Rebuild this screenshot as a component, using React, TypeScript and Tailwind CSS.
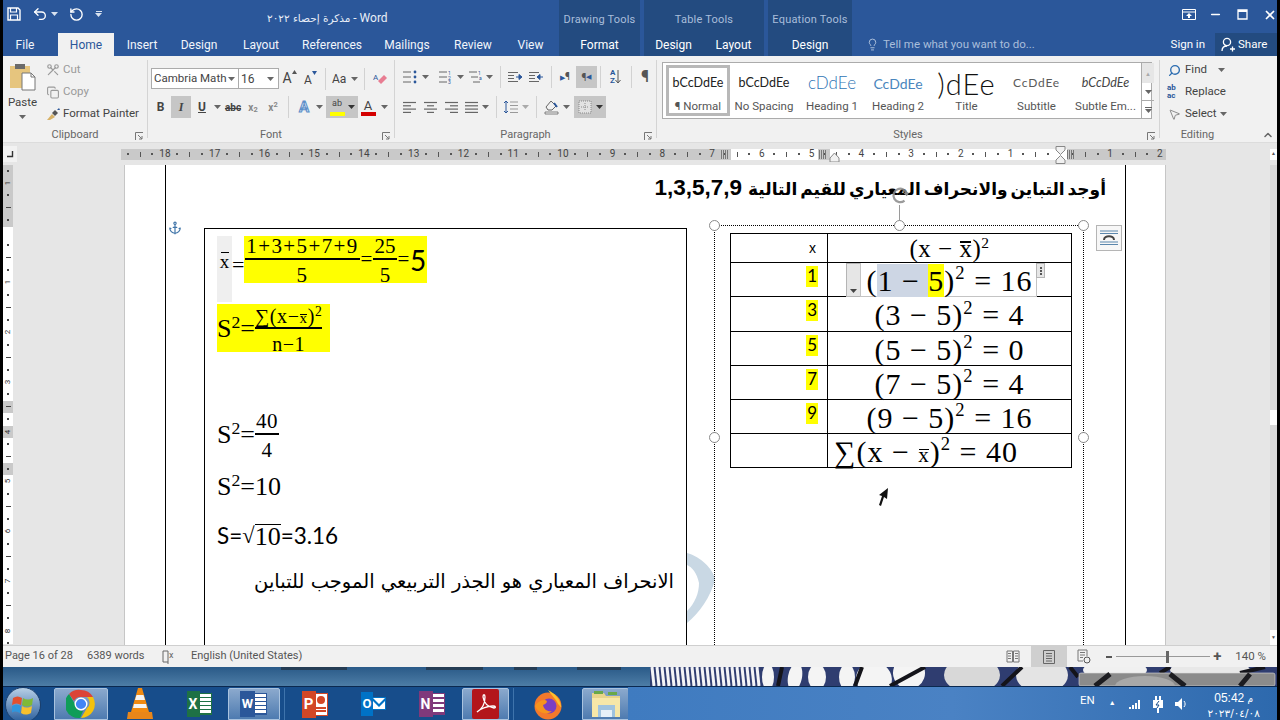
import React from 'react';
import { Undo2, RotateCw, Scissors, Copy, Search, MousePointer2, Lightbulb, X, Minus, ChevronUp, Anchor } from 'lucide-react';

const Caret = ({ c = '#666' }: { c?: string }) => (
  <svg width="7" height="4" viewBox="0 0 7 4" className="shrink-0"><path d="M0 0h7L3.5 4z" fill={c} /></svg>
);

const Launcher = () => (
  <svg width="9" height="9" viewBox="0 0 9 9" className="shrink-0"><path d="M.5 8V.5H8M3 3l4 4M7 4v3H4" fill="none" stroke="#777" /></svg>
);

const Sep = ({ cls = 'mx-[6px]' }: { cls?: string }) => <div className={`w-px h-[22px] bg-[#d2d2d2] shrink-0 ${cls}`} />;

const Lines = ({ rows, c = '#666' }: { rows: number[][]; c?: string }) => (
  <svg width="15" height="13" viewBox="0 0 15 13">
    {rows.map((r, i) => <path key={i} d={`M${r[0]} ${1.5 + i * 3.3}H${r[1]}`} stroke={c} strokeWidth="1.2" />)}
  </svg>
);

const Group = ({ label, w, launcher, children }: { label: string; w: string; launcher?: boolean; children: React.ReactNode }) => (
  <div className={`${w} shrink-0 flex flex-col`}>
    <div className="h-[73px] shrink-0">{children}</div>
    <div className="h-[13px] shrink-0 flex items-center relative text-[11px] text-[#666]">
      <span className="flex-1 text-center">{label}</span>
      {launcher && <span className="absolute right-[3px] top-[3px]"><Launcher /></span>}
    </div>
  </div>
);

const GroupLine = () => <div className="w-px my-[4px] bg-[#d4d4d4] shrink-0" />;

function TitleArea() {
  return (
    <div className="h-[56px] bg-[#2b579a] flex text-white shrink-0">
      <div className="w-[556px] flex flex-col">
        <div className="h-[33px] flex items-start">
          <div className="flex items-center pt-[6px]">
            <div className="w-[18px] flex justify-end">
              <svg width="14" height="14" viewBox="0 0 14 14"><path d="M1 1h10l2 2v10H1z" fill="none" stroke="#fff" strokeWidth="1.4" /><path d="M3.5 1v4h6V1M3.5 13V8h7v5" fill="none" stroke="#fff" strokeWidth="1.2" /></svg>
            </div>
            <Undo2 size={16} strokeWidth={2} className="ml-[11px]" />
            <span className="ml-[3px]"><Caret c="#d8e2f0" /></span>
            <RotateCw size={15} strokeWidth={2.2} className="ml-[11px] -scale-x-100" />
            <div className="ml-[11px] flex flex-col items-center gap-[1px]">
              <div className="w-[6px] h-px bg-[#d8e2f0]" />
              <Caret c="#d8e2f0" />
            </div>
          </div>
          <div dir="ltr" className="ml-[165px] pt-[9px] text-[12px] text-[#e8eef7] whitespace-nowrap font-['DejaVu_Sans',sans-serif]">
            <span className="text-[10.5px]">مذكرة إحصاء ٢٠٢٢</span><span className="font-['Roboto',sans-serif] text-[12px]"> - Word</span>
          </div>
        </div>
        <div className="h-[23px] flex text-[12px] text-[#f2f5fa]">
          <div className="w-[55px] pr-[11px] flex items-center justify-center">File</div>
          <div className="w-[56px] flex items-center justify-center bg-[#f1f1f1] text-[#2b579a]">Home</div>
          <div className="w-[56px] flex items-center justify-center">Insert</div>
          <div className="w-[58px] flex items-center justify-center">Design</div>
          <div className="w-[66px] flex items-center justify-center">Layout</div>
          <div className="w-[76px] flex items-center justify-center">References</div>
          <div className="w-[74px] flex items-center justify-center">Mailings</div>
          <div className="w-[58px] flex items-center justify-center">Review</div>
          <div className="w-[57px] flex items-center justify-center">View</div>
        </div>
      </div>
      <div className="w-[81px] bg-[#234b80] flex flex-col">
        <div className="h-[33px] pt-[7px] flex items-center justify-center text-[11px] text-[#a9bedb] tracking-[0.2px]">Drawing Tools</div>
        <div className="h-[23px] flex items-center justify-center text-[12px]">Format</div>
      </div>
      <div className="w-[120px] ml-[4px] bg-[#234b80] flex flex-col">
        <div className="h-[33px] pt-[7px] flex items-center justify-center text-[11px] text-[#a9bedb] tracking-[0.2px]">Table Tools</div>
        <div className="h-[23px] flex text-[12px]">
          <div className="w-[59px] flex items-center justify-center">Design</div>
          <div className="w-[61px] flex items-center justify-center">Layout</div>
        </div>
      </div>
      <div className="w-[84px] ml-[4px] bg-[#234b80] flex flex-col">
        <div className="h-[33px] pt-[7px] flex items-center justify-center text-[11px] text-[#a9bedb] tracking-[0.2px]">Equation Tools</div>
        <div className="h-[23px] flex items-center justify-center text-[12px]">Design</div>
      </div>
      <div className="flex-1 flex flex-col">
        <div className="h-[33px] pb-[4px] flex items-center justify-end">
          <svg width="14" height="11" viewBox="0 0 14 11"><path d="M.5.5h13v10H.5zM.5 3h13" fill="none" stroke="#fff" /><path d="M7 4l3 3H8v2H6V7H4z" fill="#fff" /></svg>
          <Minus size={13} strokeWidth={3} className="ml-[13px]" />
          <svg width="11" height="11" viewBox="0 0 11 11" className="ml-[15px]"><path d="M1 1h9v9H1z" fill="none" stroke="#fff" strokeWidth="1.3" /><path d="M1 2h9" stroke="#fff" strokeWidth="2" /></svg>
          <X size={14} strokeWidth={3} className="ml-[15px] mr-0" />
        </div>
        <div className="h-[23px] flex items-center text-[11.5px]">
          <Lightbulb size={13} strokeWidth={1.5} className="ml-[14px] text-[#c5d4e8]" />
          <span className="ml-[4px] text-[#a9bedb] whitespace-nowrap">Tell me what you want to do...</span>
          <span className="ml-auto mr-[10px]">Sign in</span>
          <div className="w-[62px] h-full bg-[#234b80] flex items-center pl-[6px] gap-[3px]">
            <svg width="14" height="15" viewBox="0 0 14 15"><circle cx="6" cy="5" r="3.6" fill="none" stroke="#fff" strokeWidth="1.3" /><path d="M1 14c0-3 2-5 5-5M9 12h5M11.5 9.5v5" fill="none" stroke="#fff" strokeWidth="1.3" /></svg>
            <span>Share</span>
          </div>
        </div>
      </div>
    </div>
  );
}

function Clipboard() {
  return (
    <Group label="Clipboard" w="w-[144px]" launcher>
      <div className="flex">
        <div className="w-[39px] flex flex-col items-center pt-[7px]">
          <svg width="28" height="28" viewBox="0 0 28 28">
            <rect x="1" y="3" width="20" height="22" fill="#e6c57e" />
            <rect x="6" y="1" width="10" height="5" fill="#6b6b6b" />
            <path d="M13 10h9l4 4v13H13z" fill="#fff" stroke="#777" />
            <path d="M22 10v4h4" fill="none" stroke="#777" />
          </svg>
          <span className="text-[11.5px] text-[#444] mt-[4px] leading-[14px]">Paste</span>
          <span className="mt-[6px]"><Caret /></span>
        </div>
        <div className="flex flex-col pt-[3px] text-[11.5px]">
          <div className="h-[22px] flex items-center ml-[4px] text-[#9a9a9a]"><Scissors size={14} className="w-[14px] -scale-x-100 -rotate-90" /><span className="ml-[3px]">Cut</span></div>
          <div className="h-[22px] flex items-center ml-[4px] text-[#9a9a9a]"><Copy size={13} className="w-[14px]" /><span className="ml-[3px]">Copy</span></div>
          <div className="h-[22px] flex items-center ml-[4px] text-[#444] whitespace-nowrap">
            <svg width="15" height="14" viewBox="0 0 15 14"><path d="M1 13l5-6 3 3-5 3z" fill="#d8b267" /><path d="M6 6l3-3 3 3-3 3z" fill="#555" /><path d="M11 3l2-2 1 2z" fill="#2b579a" /></svg>
            <span className="ml-[2px]">Format Painter</span>
          </div>
        </div>
      </div>
    </Group>
  );
}

function FontGroup() {
  return (
    <Group label="Font" w="w-[246px]" launcher>
      <div className="pt-[12px] pl-[3px]">
        <div className="h-[21px] flex items-center text-[#444]">
          <div className="w-[88px] h-full bg-white border border-[#ababab] flex items-center justify-between pl-[2px] pr-[3px] text-[11.5px] whitespace-nowrap">Cambria Math<Caret /></div>
          <div className="w-[40px] h-full bg-white border border-l-0 border-[#ababab] flex items-center justify-between pl-[2px] pr-[4px] text-[12px]">16<Caret /></div>
          <div className="w-[21px] flex justify-center items-start text-[14px]"><span>A</span><svg width="5" height="4" viewBox="0 0 5 4" className="mt-[2px]"><path d="M0 4l2.500-4L5 4z" fill="#555" /></svg></div>
          <div className="w-[21px] flex justify-center items-start text-[12px] pt-[2px]"><span>A</span><svg width="5" height="4" viewBox="0 0 5 4"><path d="M0 0l2.500 4L5 0z" fill="#2b579a" /></svg></div>
          <Sep cls="ml-[4px] mr-[6px]" />
          <div className="flex items-center gap-[5px] text-[12px] w-[26px]">Aa<Caret /></div>
          <Sep cls="ml-[6px] mr-[8px]" />
          <svg width="16" height="14" viewBox="0 0 16 14"><path d="M8 12l6-6-3-3-6 6z" fill="#e87d92" /><text x="0" y="8" fontSize="8" fill="#2b579a" fontFamily="Roboto">A</text></svg>
        </div>
        <div className="h-[22px] mt-[7px] flex items-center text-[#444] -ml-[1px]">
          <div className="w-[21px] text-center text-[12px] font-bold">B</div>
          <div className="w-[20px] h-full bg-[#c6c6c6] flex items-center justify-center text-[12px] italic font-['Liberation_Serif',serif] font-bold">I</div>
          <div className="w-[20px] pl-[2px] text-center text-[12px] underline font-bold">U</div>
          <div className="w-[12px] pl-[3px]"><Caret /></div>
          <div className="w-[20px] text-center text-[10px] line-through font-bold">abc</div>
          <div className="w-[20px] text-center text-[10px] text-[#888] font-bold">x<sub>2</sub></div>
          <div className="w-[20px] text-center text-[10px] text-[#888] font-bold">x<sup>2</sup></div>
          <Sep cls="ml-[5px] mr-[7px]" />
          <div className="w-[16px] text-center text-[15px] leading-none font-bold text-[#dbe7f5] [-webkit-text-stroke:1px_#5b8fc9]">A</div>
          <div className="w-[13px] pl-[4px]"><Caret /></div>
          <div className="w-[32px] h-full bg-[#c6c6c6] flex items-center justify-center gap-[3px] ml-[1px]">
            <div className="flex flex-col items-center leading-none">
              <span className="text-[9px] h-[11px]">ab</span>
              <div className="w-[15px] h-[4px] bg-[#ffff00] mt-[2px]" />
            </div>
            <Caret c="#333" />
          </div>
          <div className="w-[16px] ml-[2px] flex flex-col items-center leading-none">
            <span className="text-[13px] h-[13px]">A</span>
            <div className="w-[15px] h-[4px] bg-[#d40000]" />
          </div>
          <div className="pl-[5px]"><Caret /></div>
        </div>
      </div>
    </Group>
  );
}

const left = [[1, 14], [1, 9], [1, 14], [1, 9]];
const center = [[1, 14], [4, 11], [1, 14], [4, 11]];
const right = [[1, 14], [6, 14], [1, 14], [6, 14]];
const just = [[1, 14], [1, 14], [1, 14], [1, 14]];

function Paragraph() {
  return (
    <Group label="Paragraph" w="w-[261px]" launcher>
      <div className="pt-[10px] pl-[7px]">
        <div className="h-[22px] flex items-center">
          <svg width="16" height="14" viewBox="0 0 16 14"><path d="M1 2h8M1 7h8M1 12h8" stroke="#666" /><circle cx="13" cy="2" r="1.4" fill="#2b579a" /><circle cx="13" cy="7" r="1.4" fill="#2b579a" /><circle cx="13" cy="12" r="1.4" fill="#2b579a" /></svg>
          <span className="ml-[4px] mr-[9px]"><Caret /></span>
          <svg width="15" height="14" viewBox="0 0 15 14"><path d="M1 2h8M1 7h8M1 12h8" stroke="#666" /><text x="10" y="5" fontSize="5" fill="#2b579a">1</text><text x="10" y="10" fontSize="5" fill="#2b579a">2</text><text x="10" y="14" fontSize="5" fill="#2b579a">3</text></svg>
          <span className="ml-[4px] mr-[4px]"><Caret /></span>
          <svg width="15" height="14" viewBox="0 0 15 14"><path d="M1 2h8M3 7h7M5 12h7" stroke="#666" /><text x="10" y="5" fontSize="5" fill="#2b579a">1</text><text x="11" y="10" fontSize="5" fill="#2b579a">a</text></svg>
          <span className="ml-[3px]"><Caret /></span>
          <Sep cls="ml-[7px] mr-[6px]" />
          <svg width="16" height="12" viewBox="0 0 16 12"><path d="M1 1.5h10M1 4.5h6M1 7.5h6M1 10.5h10" stroke="#666" /><path d="M9 6h4M12 3.5L15 6l-3 2.5z" stroke="#2b579a" fill="#2b579a" /></svg>
          <span className="w-[5px]" />
          <svg width="16" height="12" viewBox="0 0 16 12"><path d="M1 1.5h10M1 4.5h6M1 7.5h6M1 10.5h10" stroke="#666" /><path d="M15 6h-4M12 3.5L9 6l3 2.5z" stroke="#2b579a" fill="#2b579a" /></svg>
          <Sep cls="ml-[7px] mr-[8px]" />
          <div className="w-[12px] text-[10px] text-[#555] leading-none whitespace-nowrap"><span className="text-[#2b579a] text-[7px]">▶</span>¶</div>
          <div className="w-[21px] h-full bg-[#c6c6c6] ml-[4px] flex items-center justify-center text-[10px] text-[#555] whitespace-nowrap">¶<span className="text-[#2b579a] text-[7px]">◀</span></div>
          <Sep cls="ml-[3px] mr-[9px]" />
          <div className="w-[14px] flex items-center">
            <div className="text-[8px] leading-[8px] text-[#2b579a] font-bold">A<br />Z</div>
            <svg width="6" height="14" viewBox="0 0 6 14"><path d="M3 0v13M.5 10L3 13l2.5-3" fill="none" stroke="#555" /></svg>
          </div>
          <Sep cls="ml-[7px] mr-[9px]" />
          <span className="text-[16px] text-[#555] leading-none font-bold">¶</span>
        </div>
        <div className="h-[22px] mt-[8px] flex items-center">
          <Lines rows={left} />
          <span className="w-[6px]" />
          <Lines rows={center} />
          <span className="w-[6px]" />
          <Lines rows={right} />
          <span className="w-[5px]" />
          <Lines rows={just} />
          <span className="ml-[3px]"><Caret /></span>
          <Sep cls="ml-[7px] mr-[6px]" />
          <svg width="16" height="14" viewBox="0 0 16 14"><path d="M3 1v12M1 3l2-2 2 2M1 11l2 2 2-2" fill="none" stroke="#2b579a" /><path d="M7 2h8M7 5.500h8M7 9h8M7 12.500h8" stroke="#999" /></svg>
          <span className="ml-[3px]"><Caret c="#aaa" /></span>
          <Sep cls="ml-[7px] mr-[7px]" />
          <svg width="16" height="16" viewBox="0 0 16 16"><path d="M2 8l5-6 5 5-4 4H4z" fill="none" stroke="#666" /><path d="M10 4l3 4" stroke="#2b579a" strokeWidth="2" /><path d="M1 13h13v2H1z" fill="#f5f5f5" stroke="#666" strokeWidth=".8" /></svg>
          <span className="ml-[3px]"><Caret /></span>
          <div className="w-[32px] h-full ml-[4px] bg-[#c6c6c6] flex items-center justify-center gap-[4px]">
            <svg width="14" height="14" viewBox="0 0 14 14"><path d="M1 1h12v12H1z" fill="#e2e2e2" stroke="#888" strokeDasharray="1 1" /><path d="M7 3v8M3 7h8" stroke="#8a8a8a" strokeDasharray="1 1" /></svg>
            <Caret c="#333" />
          </div>
        </div>
      </div>
    </Group>
  );
}

const preview = "font-['Lato',sans-serif] text-[#222] text-[12.5px] whitespace-nowrap";
const styleName = 'mt-[3px] text-[11.5px] text-[#555] leading-none whitespace-nowrap';

function Styles() {
  return (
    <Group label="Styles" w="w-[502px]" launcher>
      <div className="pt-[6px] pl-[5px]">
        <div className="h-[57px] w-[490px] border border-[#ababab] bg-white flex">
          <div className="w-[67px] pl-[3px] py-[2px] shrink-0"><div className="h-full border-[3px] border-[#b8b8b8] flex flex-col items-center">
            <div className={`h-[30px] flex items-center ${preview}`}>bCcDdEe</div>
            <div className={styleName}>¶ Normal</div>
          </div></div>
          <div className="w-[68px] flex flex-col items-center shrink-0 pt-[5px]">
            <div className={`h-[30px] flex items-center ${preview}`}>bCcDdEe</div>
            <div className={styleName}>No Spacing</div>
          </div>
          <div className="w-[68px] flex flex-col items-center shrink-0 pt-[5px]">
            <div className="h-[30px] flex items-center text-[17px] text-[#2e74b5] font-['Lato',sans-serif] font-light whitespace-nowrap">cDdEe</div>
            <div className={styleName}>Heading 1</div>
          </div>
          <div className="w-[64px] flex flex-col items-center shrink-0 pt-[5px]">
            <div className="h-[30px] flex items-center text-[14px] text-[#4a86bd] font-['Lato',sans-serif] whitespace-nowrap">CcDdEe</div>
            <div className={styleName}>Heading 2</div>
          </div>
          <div className="w-[73px] flex flex-col items-center shrink-0 pt-[5px]">
            <div className="h-[30px] flex items-center text-[29px] leading-none text-[#111] font-['Lato',sans-serif] font-light whitespace-nowrap tracking-[1px]">)dEe</div>
            <div className={styleName}>Title</div>
          </div>
          <div className="w-[67px] flex flex-col items-center shrink-0 pt-[5px]">
            <div className="h-[30px] flex items-center text-[12px] text-[#5a5a5a] font-['Lato',sans-serif] tracking-[0.8px] whitespace-nowrap">CcDdEe</div>
            <div className={styleName}>Subtitle</div>
          </div>
          <div className="w-[71px] flex flex-col items-center shrink-0 pt-[5px]">
            <div className={`h-[30px] flex items-center italic ${preview} text-[#444]`}>bCcDdEe</div>
            <div className={styleName}>Subtle Em...</div>
          </div>
          <div className="w-[13px] border-l border-[#ababab] flex flex-col shrink-0">
            <div className="h-[20px] bg-[#e6e6e6] flex items-center justify-center text-[6px] text-[#aaa]">▲</div>
            <div className="h-[18px] border-b border-[#ababab] flex items-center justify-center"><Caret /></div>
            <div className="flex-1 flex flex-col items-center justify-center gap-[1px]"><div className="w-[7px] h-px bg-[#666]" /><Caret /></div>
          </div>
        </div>
      </div>
    </Group>
  );
}

function Editing() {
  return (
    <Group label="Editing" w="w-[75px]">
      <div className="pt-[3px] pl-[7px] text-[11.5px] text-[#444]">
        <div className="h-[22px] flex items-center gap-[3px]"><Search size={13} strokeWidth={2.5} className="w-[15px] text-[#2b6cb0] -scale-x-100" /><span>Find</span><span className="ml-[8px]"><Caret /></span></div>
        <div className="h-[22px] flex items-center gap-[3px]"><div className="w-[15px] text-[8px] leading-[8px] text-[#2b579a] font-bold">ab<br />ac</div><span>Replace</span></div>
        <div className="h-[22px] flex items-center gap-[3px]"><MousePointer2 size={13} strokeWidth={1.2} className="w-[15px] text-[#555]" /><span>Select</span><Caret /></div>
      </div>
    </Group>
  );
}

function HRuler() {
  return (
    <div className="h-[22px] flex items-center bg-[#e6e6e6] shrink-0">
      <div className="w-[14px] h-[16px] bg-[#f2f2f2] flex items-center justify-center">
        <svg width="7" height="7" viewBox="0 0 7 7"><path d="M5.500 0v5.500H0" fill="none" stroke="#333" strokeWidth="1.4" /></svg>
      </div>
      <div className="ml-[104.4px] flex relative text-[10px] text-[#444] leading-none">
        {Array.from({ length: 84 }, (_, k) => {
          const white = k >= 49 && k < 76 && k !== 56;
          const n = (k - 3) / 4;
          const label = k % 4 === 3 ? (k <= 71 ? 18 - n : k === 79 ? 1 : k === 83 ? 2 : '') : '';
          return (
            <div key={k} className={`w-[12.45px] h-[11px] shrink-0 flex items-center justify-center ${white ? 'bg-white' : 'bg-[#c9c9c9]'}`}>
              {k % 4 === 3 && <span>{label}</span>}
              {(k % 4 === 0 || k % 4 === 2) && <div className="w-[2px] h-[2px] bg-[#555]" />}
              {k % 4 === 1 && <div className="w-px h-[5px] bg-[#555]" />}
            </div>
          );
        })}
        <div className="absolute left-[600px] top-[1px] w-[7px] h-[9px] bg-[repeating-linear-gradient(90deg,#777_0_1px,transparent_1px_2px)]" />
        <div className="absolute left-[698px] top-[1px] w-[7px] h-[9px] bg-[repeating-linear-gradient(90deg,#777_0_1px,transparent_1px_2px)]" />
        <div className="absolute left-[946px] top-[1px] w-[7px] h-[9px] bg-[repeating-linear-gradient(90deg,#777_0_1px,transparent_1px_2px)]" />
        <svg width="11" height="10" viewBox="0 0 11 10" className="absolute left-[708px] top-[3px]"><path d="M5.500 1L10 6v4H1V6z" fill="#f1f1f1" stroke="#888" /></svg>
        <svg width="11" height="18" viewBox="0 0 11 18" className="absolute left-[934px] -top-[3px]"><path d="M1 .5h9V4L5.500 8.500 1 4zM5.500 9.500L10 14v3.500H1V14z" fill="#f1f1f1" stroke="#888" /></svg>
      </div>
      <div className="ml-auto w-[7px] h-[11px] bg-white flex items-center justify-center text-[5px] text-[#555]">▲</div>
    </div>
  );
}

function VRuler() {
  return (
    <div className="w-[10px] h-full overflow-hidden shrink-0 flex flex-col -mt-[0.7px] text-[8px] text-[#333] leading-none">
      {Array.from({ length: 40 }, (_, k) => {
        const grey = k < 5 || k === 19 || k === 21 || k === 24;
        const label = (k - 5) / 4;
        const isLabel = (k - 1) % 4 === 0;
        return (
          <div key={k} className={`h-[12.45px] w-full shrink-0 flex items-center justify-center ${grey ? 'bg-[#c9c9c9]' : 'bg-white'}`}>
            {isLabel && k !== 5 && <span className="-rotate-90">{k === 1 ? 1 : label}</span>}
            {k % 2 === 0 && <div className="w-[2px] h-[2px] bg-[#444]" />}
            {(k + 1) % 4 === 0 && <div className="w-[5px] h-px bg-[#444]" />}
          </div>
        );
      })}
    </div>
  );
}

const serif = "font-['Liberation_Serif',serif]";

const Frac = ({ top, bottom, cls = '', lineCls = 'h-[2px]' }: { top: React.ReactNode; bottom: React.ReactNode; cls?: string; lineCls?: string }) => (
  <span className={`inline-flex flex-col items-center align-middle leading-none mt-[3px] ${cls}`}>
    <span className="whitespace-nowrap pb-[1px]">{top}</span>
    <span className={`w-full bg-black ${lineCls}`} />
    <span className="whitespace-nowrap pt-[5px]">{bottom}</span>
  </span>
);

// x with a bar set close on top of it
const Bar = ({ cls = '' }: { cls?: string }) => (
  <span className={`relative inline-block ${cls}`}>x<span className="absolute left-[8%] right-[8%] top-[0.2em] h-[1.5px] bg-black" /></span>
);

const Handle = ({ cls }: { cls: string }) => (
  <div className={`absolute w-[11px] h-[11px] rounded-full bg-white border-[1.5px] border-[#8a8a8a] ${cls}`} />
);

const cellRight = 'border border-black w-[244px] text-center align-middle p-0';
const cellLeft = 'border border-black w-[97px] text-right align-top p-0 pr-[9px]';

const Num = ({ v }: { v: string }) => (
  <span className="inline-block bg-[#ffff00] font-['Lato',sans-serif] text-[17px] leading-[20px] h-[21px] px-[1px] mt-[3px]">{v}</span>
);

const Mathy = ({ children, cls = 'text-[30px] tracking-[1px]' }: { children: React.ReactNode; cls?: string }) => (
  <span className={`${serif} relative top-[2px] leading-none whitespace-nowrap [&_sup]:text-[0.62em] [&_sup]:-top-[0.6em] ${cls}`}>{children}</span>
);

function Page() {
  return (
    <div className="w-[1042px] bg-white border-x border-[#c6c6c6] shrink-0 h-full pl-[40px] pr-[39px] overflow-hidden">
      <div className="h-full border-x border-black relative">
        <div dir="rtl" className="h-[60px] pr-[19px] pt-[10px] text-[17px] font-bold leading-[26px] whitespace-nowrap font-['DejaVu_Sans',sans-serif] [word-spacing:-3px]">
          أوجد التباين والانحراف المعياري للقيم التالية <span className="font-['Liberation_Sans',sans-serif] text-[22.5px] mr-[3px]">1,3,5,7,9</span>
        </div>
        <Anchor size={14} strokeWidth={2} className="absolute left-[2px] top-[56px] text-[#3f74a8]" />
        <div className="flex items-start pl-[38px]">
          <div className="w-[483px] h-[430px] mt-[3px] border border-black pl-[12px] pt-[7px] text-black">
            <div className="flex items-start h-[68px]">
              <div className={`w-[15px] h-[66px] bg-[#efefef] ${serif} text-[19px] pt-[12px] text-center`}><Bar /></div>
              <div className={`${serif} text-[22px] pt-[12px] w-[11px]`}>=</div>
              <div className={`h-[47px] bg-[#ffff00] flex items-center ${serif} text-[21px] ml-[1px] pl-[1px] pr-[1px]`}>
                <Frac top="1+3+5+7+9" bottom="5" cls="w-[115px] tracking-[1.4px]" />
                <span className="w-[13px] text-center">=</span>
                <Frac top="25" bottom="5" cls="w-[24px]" />
                <span className="w-[13px] text-center">=</span>
                <span className="font-['Lato',sans-serif] text-[28px] leading-none">5</span>
              </div>
            </div>
            <div className={`w-[113px] h-[48px] bg-[#ffff00] flex items-center ${serif} text-[26px] whitespace-nowrap [&_sup]:text-[0.68em]`}>
              <span>S<sup>2</sup>=</span>
              <Frac top={<span>∑(x−<Bar cls="text-[15px]" />)<sup>2</sup></span>} bottom="n−1" cls="text-[20px] tracking-[0.6px]" />
            </div>
            <div className={`mt-[57px] h-[50px] flex items-center ${serif} text-[26px] whitespace-nowrap [&_sup]:text-[0.68em]`}>
              <span>S<sup>2</sup>=</span>
              <Frac top="40" bottom="4" cls="text-[21px] tracking-[0.5px] w-[24px]" />
            </div>
            <div className={`mt-[12px] h-[30px] flex items-center text-[26px] whitespace-nowrap ${serif} [&_sup]:text-[0.68em]`}>
              <span>S<sup>2</sup>=10</span>
            </div>
            <div className="mt-[20px] h-[30px] flex items-center text-[22.5px] whitespace-nowrap font-['Lato',sans-serif]">
              <span>S=</span><span className={serif}>√</span><span className={`${serif} text-[26px] border-t-[1.5px] border-black leading-[23px]`}>10</span><span>=3.16</span>
            </div>
            <div dir="rtl" className="mt-[16px] mr-[12px] text-[19.5px] leading-[30px] whitespace-nowrap font-['DejaVu_Sans',sans-serif] text-right">
              الانحراف المعياري هو الجذر التربيعي الموجب للتباين
            </div>
          </div>
          <svg width="28" height="74" viewBox="0 0 28 74" className="shrink-0 mt-[328px]"><path d="M0 0c14 4 26 16 28 26-4 18-16 34-28 44V58c8-8 12-18 12-28C10 20 5 14 0 12z" fill="#c9d8e4" /></svg>
          <div className="-ml-px w-[370px] h-[430px] border-x border-t border-dotted border-black relative">
            <Handle cls="-left-[6px] -top-[6px]" />
            <Handle cls="left-[179px] -top-[6px]" />
            <Handle cls="-right-[6px] -top-[6px]" />
            <Handle cls="-left-[6px] top-[206px]" />
            <Handle cls="-right-[6px] top-[206px]" />
            <div className="absolute left-[184px] -top-[21px] w-px h-[16px] bg-[#9a9a9a]" />
            <svg width="18" height="18" viewBox="0 0 16 16" className="absolute left-[176px] -top-[40px]"><path d="M12 13A6 6 0 1 1 14 7" fill="none" stroke="#8a8a8a" strokeWidth="2" opacity=".85" /><path d="M11 6h5l-2 3z" fill="#8a8a8a" /></svg>
            <div className="absolute -right-[39px] -top-[1px] w-[26px] h-[26px] bg-[#f7f7f7] border border-[#b5b5b5] flex items-center justify-center">
              <svg width="20" height="16" viewBox="0 0 20 16"><path d="M1 1h18M1 3.500h18M1 12h18M1 14.500h18" stroke="#5b87ad" /><path d="M5 10c0-5 10-5 10 0" fill="none" stroke="#444" strokeWidth="2" /></svg>
            </div>
            <table className="mt-[7px] ml-[15px] border-collapse text-black table-fixed">
              <tbody>
                <tr className="h-[29px]">
                  <td className="border border-black w-[97px] text-right align-middle p-0 pr-[11px] text-[14px] font-['Liberation_Sans',sans-serif]">x</td>
                  <td className={cellRight}><Mathy cls="text-[25px] tracking-[0.5px]">(x − <Bar />)<sup>2</sup></Mathy></td>
                </tr>
                <tr className="h-[34px]">
                  <td className={cellLeft}><Num v="1" /></td>
                  <td className={`${cellRight} relative`}>
                    <div className="absolute left-[18px] top-0 h-[34px] w-[15px] bg-[#e6e6e6] border border-[#b5b5b5] flex items-end justify-center pb-[3px]"><Caret c="#444" /></div>
                    <div className="absolute left-[32px] top-0 h-[34px] w-[177px] border border-[#c4c4c4] border-t-0" />
                    <div className="absolute left-[208px] top-0 h-[15px] w-[9px] bg-[#e6e6e6] border border-[#b5b5b5] flex flex-col items-center justify-center gap-px">
                      <div className="w-[2px] h-[2px] bg-[#555]" /><div className="w-[2px] h-[2px] bg-[#555]" /><div className="w-[2px] h-[2px] bg-[#555]" />
                    </div>
                    <Mathy><span className="bg-transparent">(</span><span className="bg-[#cdd6e4]">1 − </span><span className="bg-[#ffff00]">5</span>)<sup>2</sup> = 16</Mathy>
                  </td>
                </tr>
                <tr className="h-[35px]"><td className={cellLeft}><Num v="3" /></td><td className={cellRight}><Mathy>(3 − 5)<sup>2</sup> = 4</Mathy></td></tr>
                <tr className="h-[34px]"><td className={cellLeft}><Num v="5" /></td><td className={cellRight}><Mathy>(5 − 5)<sup>2</sup> = 0</Mathy></td></tr>
                <tr className="h-[34px]"><td className={cellLeft}><Num v="7" /></td><td className={cellRight}><Mathy>(7 − 5)<sup>2</sup> = 4</Mathy></td></tr>
                <tr className="h-[34px]"><td className={cellLeft}><Num v="9" /></td><td className={cellRight}><Mathy>(9 − 5)<sup>2</sup> = 16</Mathy></td></tr>
                <tr className="h-[34px]">
                  <td className="border border-black w-[97px] p-0" />
                  <td className="border border-black w-[244px] text-left align-middle p-0 pl-[6px]"><Mathy>∑(x − <Bar cls="text-[21px]" />)<sup>2</sup> = 40</Mathy></td>
                </tr>
              </tbody>
            </table>
            <svg width="12" height="18" viewBox="0 0 12 18" className="absolute left-[163px] top-[262px]"><path d="M10 0L1 7l3 1-3 9 2 1 3-9 3 2z" fill="#111" /></svg>
          </div>
        </div>
      </div>
    </div>
  );
}

function Status() {
  return (
    <div className="h-[22px] bg-[#f1f1f1] border-t border-[#cfcfcf] flex items-center text-[11px] text-[#555] shrink-0 whitespace-nowrap">
      <span className="ml-[2px] w-[82px]">Page 16 of 28</span>
      <span className="w-[75px]">6389 words</span>
      <svg width="14" height="15" viewBox="0 0 14 15"><path d="M1 2h5v11H1zM6 13v2" fill="none" stroke="#666" /><text x="7" y="9" fontSize="9" fill="#666">x</text></svg>
      <span className="ml-[15px]">English (United States)</span>
      <div className="ml-auto flex items-center h-full">
        <svg width="14" height="13" viewBox="0 0 14 13"><path d="M1 1h5.500v11H1zM7.500 1H13v11H7.500zM2 3.500h3M2 6h3M2 8.500h3M9 3.500h3M9 6h3M9 8.500h3" fill="none" stroke="#777" /></svg>
        <div className="w-[36px] h-full ml-[11px] bg-[#cfcfcf] flex items-center justify-center">
          <svg width="14" height="14" viewBox="0 0 14 14"><path d="M1.500.5h11v13h-11zM4 3.500h6M4 6h6M4 8.500h6M4 11h6" fill="none" stroke="#666" /></svg>
        </div>
        <svg width="14" height="15" viewBox="0 0 14 15" className="ml-[10px]"><path d="M1 1h9v6M1 1v11h5M3 3.500h5M3 6h5M3 8.500h3" fill="none" stroke="#777" /><circle cx="10" cy="11" r="3" fill="none" stroke="#555" /></svg>
        <div className="w-[6px] h-[2px] bg-[#555] ml-[15px]" />
        <div className="w-[94px] h-px bg-[#999] ml-[4px] flex items-center pl-[50px]"><div className="w-[3px] h-[12px] bg-[#666] shrink-0" /></div>
        <span className="ml-[3px] text-[15px] font-bold leading-none">+</span>
        <span className="ml-[14px] mr-[11px] text-[11.5px]">140 %</span>
      </div>
    </div>
  );
}

function DesktopStrip() {
  return (
    <div className="h-[19px] flex shrink-0 overflow-hidden">
      <div className="w-[647px] bg-gradient-to-b from-[#2a5a88] to-[#4d7da6]">
        <svg width="647" height="19" viewBox="0 0 647 19">
          <g fill="#22303f" opacity=".7">
            <rect x="278" y="0" width="66" height="3" />
            <rect x="423" y="0" width="57" height="3" />
            <rect x="511" y="0" width="23" height="3" />
            <rect x="574" y="0" width="44" height="3" />
          </g>
        </svg>
      </div>
      <svg width="627" height="19" viewBox="0 0 627 19" className="shrink-0 bg-[#2f3d70]">
        <g stroke="#fff" strokeWidth="3" opacity=".95">
          {Array.from({ length: 22 }, (_, i) => <path key={i} d={`M${4 + i * 5} 19L${2 + i * 5} 0`} />)}
        </g>
        <g fill="#f4f4f4">
          <ellipse cx="118" cy="10" rx="6" ry="13" />
          <ellipse cx="145" cy="10" rx="7" ry="14" transform="rotate(10 145 10)" />
          <ellipse cx="167" cy="10" rx="9" ry="13" />
          <ellipse cx="197" cy="10" rx="8" ry="13" />
          <ellipse cx="224" cy="12" rx="18" ry="17" transform="rotate(20 224 12)" />
          <ellipse cx="259" cy="6" rx="16" ry="16" transform="rotate(20 259 6)" />
          <ellipse cx="322" cy="8" rx="28" ry="18" fill="#d8d8d8" />
          <ellipse cx="392" cy="8" rx="26" ry="18" fill="#e4e4e4" />
          <ellipse cx="465" cy="3" rx="32" ry="10" fill="#f0f0f0" />
          <ellipse cx="560" cy="3" rx="40" ry="10" fill="#e8e8e8" />
        </g>
        <g stroke="#14141a" strokeWidth="4" fill="none">
          <path d="M128 19L132 0M205 19L212 0M240 19L275 0M352 19L372 0M420 0L428 10M520 0L510 6M590 6L615 0" />
        </g>
        <rect x="429" y="6" width="196" height="13" rx="2" fill="#8b8b8b" stroke="#dcdcdc" strokeWidth=".6" />
        <g stroke="#1c1c20" strokeWidth="5" fill="none"><path d="M445 19L460 7M520 7L535 19M590 19L600 7" /></g>
        <ellipse cx="495" cy="19" rx="30" ry="10" fill="#a8a8a8" />
      </svg>
    </div>
  );
}

function TaskIcon({ kind }: { kind: string }) {
  if (kind === 'chrome') return (
    <svg width="30" height="30" viewBox="0 0 30 30">
      <path d="M15 1a14 14 0 0 1 12 7H15a7 7 0 0 0-7 4L3 5a14 14 0 0 1 12-4z" fill="#db4437" />
      <path d="M27 8a14 14 0 0 1-12 21l6-10a7 7 0 0 0 0-11z" fill="#f4c20d" />
      <path d="M3 5l6 10a7 7 0 0 0 8 7l-3 7A14 14 0 0 1 3 5z" fill="#0f9d58" />
      <circle cx="15" cy="15" r="5.800" fill="#4285f4" stroke="#fff" strokeWidth="1.400" />
    </svg>
  );
  if (kind === 'vlc') return (
    <svg width="28" height="34" viewBox="0 0 28 34">
      <path d="M12 1h4l7 24H5z" fill="#f08a12" />
      <path d="M10.500 8h7l1.500 5H9zM8 17h12l1 4H7z" fill="#f4f4f4" />
      <path d="M2 25h24l1 7H1z" fill="#e8861a" />
    </svg>
  );
  if (kind === 'excel') return (
    <div className="relative w-[26px] h-[26px]">
      <div className="absolute left-[10px] top-[2px] w-[15px] h-[22px] bg-white border border-[#1e7145] bg-[repeating-linear-gradient(0deg,#1e7145_0_1px,transparent_1px_4px)]" />
      <div className="absolute left-0 top-0 w-[13px] h-[26px] bg-[#1e7145] flex items-center justify-center text-white font-bold text-[14px]">X</div>
    </div>
  );
  if (kind === 'word') return (
    <div className="relative w-[28px] h-[26px]">
      <div className="absolute left-[12px] top-[2px] w-[15px] h-[22px] bg-white border border-[#2b579a] bg-[repeating-linear-gradient(0deg,#2b579a_0_1px,transparent_1px_4px)]" />
      <div className="absolute left-0 top-0 w-[15px] h-[26px] bg-[#2b579a] flex items-center justify-center text-white font-bold text-[13px]">W</div>
    </div>
  );
  if (kind === 'ppt') return (
    <div className="relative w-[27px] h-[27px]">
      <div className="absolute left-[11px] top-[2px] w-[15px] h-[23px] bg-white border border-[#d24726]">
        <div className="w-[8px] h-[8px] rounded-full bg-[#d24726] mt-[2px] ml-[3px]" />
        <div className="w-[10px] h-[2px] bg-[#d24726] mt-[3px] ml-[2px]" />
        <div className="w-[10px] h-[2px] bg-[#d24726] mt-[1px] ml-[2px]" />
      </div>
      <div className="absolute left-0 top-0 w-[14px] h-[27px] bg-[#d24726] flex items-center justify-center text-white font-bold text-[15px]">P</div>
    </div>
  );
  if (kind === 'outlook') return (
    <div className="relative w-[26px] h-[24px]">
      <div className="absolute left-[11px] top-[5px] w-[14px] h-[13px] bg-white border border-[#0072c6]">
        <svg width="12" height="11" viewBox="0 0 12 11"><path d="M0 0l6 6 6-6v3L6 9 0 3z" fill="#0072c6" /></svg>
      </div>
      <div className="absolute left-0 top-0 w-[12px] h-[24px] bg-[#0072c6] flex items-center justify-center text-white font-bold text-[13px]">O</div>
    </div>
  );
  if (kind === 'note') return (
    <div className="relative w-[27px] h-[26px]">
      <div className="absolute left-[11px] top-[2px] w-[15px] h-[22px] bg-white border border-[#80397b] bg-[repeating-linear-gradient(0deg,#80397b_0_2px,transparent_2px_5px)]" />
      <div className="absolute left-0 top-0 w-[14px] h-[26px] bg-[#80397b] flex items-center justify-center text-white font-bold text-[14px]">N</div>
    </div>
  );
  if (kind === 'pdf') return (
    <svg width="27" height="30" viewBox="0 0 27 30">
      <rect x="0" y="0" width="27" height="30" rx="2" fill="#b3161b" />
      <path d="M5 23c5-3 8-9 8-15 0-3-2-3-2 0 1 6 5 10 11 11 2 0 2-2-1-2-6 0-13 3-16 6z" fill="none" stroke="#fff" strokeWidth="1.300" />
    </svg>
  );
  if (kind === 'firefox') return (
    <svg width="30" height="32" viewBox="0 0 30 32">
      <circle cx="15" cy="18" r="13.500" fill="#f4792b" />
      <path d="M15 2c6 3 12 8 13 16 1 3-1 0-3-2-2-5-6-8-10-14z" fill="#fbc02d" />
      <circle cx="16" cy="18" r="7.500" fill="#7b3fc1" />
      <path d="M2 18c3-5 7-6 10-6 4 1 1 4-2 5 1 5 5 7 9 6-4 4-14 3-17-5z" fill="#f7941d" />
    </svg>
  );
  return (
    <svg width="32" height="32" viewBox="0 0 32 32">
      <path d="M2 5h12l2 3h14v19H2z" fill="#e8d48a" />
      <path d="M4 3h9v3H4zM18 4h9v3h-9z" fill="#69a849" />
      <rect x="2" y="10" width="28" height="19" fill="#f6e7a8" />
      <rect x="8" y="17" width="17" height="12" fill="#9fc3df" />
      <rect x="11" y="22" width="11" height="7" fill="#e6f0f8" />
    </svg>
  );
}

const TaskBtn = ({ w, active, kind }: { w: string; active?: boolean; kind: string }) => (
  <div className={`${w} h-full shrink-0 flex items-center justify-center rounded-t-[2px] ${active ? 'bg-gradient-to-b from-[#8ba9cd] to-[#4e7bb0] border border-[#a9c3df]' : ''}`}>
    <TaskIcon kind={kind} />
  </div>
);

function Taskbar() {
  return (
    <div className="flex-1 flex border-t border-[#0b2950] overflow-hidden">
      <div className="w-[625px] shrink-0 h-full bg-[#174d8b] flex pt-[1px]">
        <div className="w-[39px] flex items-center justify-center shrink-0">
          <div className="w-[36px] h-[36px] shrink-0 rounded-full bg-gradient-to-b from-[#b8d0e6] to-[#2a5f9c] border border-[#1b3f6c] flex items-center justify-center mt-[2px]">
            <svg width="22" height="20" viewBox="0 0 22 20">
              <path d="M1 3c3-2 6-2 9 0l-1 7c-3-2-6-2-9 0z" fill="#e2502e" />
              <path d="M11 3c3 2 6 2 10 0l-1 7c-4 2-7 2-10 0z" fill="#7fb936" />
              <path d="M0 11c3-2 6-2 9 0l-1 7c-3-2-6-2-9 0z" fill="#2f95dc" />
              <path d="M10 11c3 2 6 2 10 0l-1 7c-4 2-7 2-10 0z" fill="#f7c02c" />
            </svg>
          </div>
        </div>
        <TaskBtn w="w-[54px] ml-[12px]" active kind="chrome" />
        <TaskBtn w="w-[63px]" kind="vlc" />
        <TaskBtn w="w-[57px]" kind="excel" />
        <TaskBtn w="w-[52px]" active kind="word" />
        <div className="w-px h-full bg-[#3f74ac] shrink-0 ml-[4px]" />
        <TaskBtn w="w-[60px]" kind="ppt" />
        <TaskBtn w="w-[58px]" kind="outlook" />
        <TaskBtn w="w-[58px]" kind="note" />
        <TaskBtn w="w-[47px] ml-[1px]" active kind="pdf" />
        <div className="w-px h-full bg-[#3f74ac] shrink-0 ml-[4px]" />
        <TaskBtn w="w-[68px]" kind="firefox" />
        <TaskBtn w="w-[47px]" active kind="explorer" />
      </div>
      <div className="flex-1 h-full bg-gradient-to-r from-[#3f7bc0] via-[#4a82c4] to-[#2d69ad] flex items-center text-white pl-[452px] whitespace-nowrap">
        <span className="text-[11.5px] mb-[6px]">EN</span>
        <span className="ml-[14px] text-[7px]">▲</span>
        <svg width="13" height="11" viewBox="0 0 13 11" className="ml-[13px]"><path d="M1 11V9M4 11V7M7 11V5M10 11V2" stroke="#fff" strokeWidth="2" /></svg>
        <svg width="14" height="18" viewBox="0 0 14 18" className="ml-[9px]"><path d="M2 5h10v8H2z" fill="#fff" /><path d="M5 1v4M9 1v4M7 13v5" stroke="#fff" strokeWidth="2" /><path d="M8 6l-3 4h3l-2 3" stroke="#174d8b" fill="none" /></svg>
        <svg width="14" height="14" viewBox="0 0 14 14" className="ml-[9px]"><path d="M1 5h3l4-4v12L4 9H1z" fill="#fff" /><path d="M10 4c1.500 2 1.500 4 0 6" fill="none" stroke="#fff" /></svg>
        <div className="ml-[18px] w-[56px] flex flex-col items-center leading-none pt-[3px]">
          <span className="text-[12px] font-['Liberation_Sans',sans-serif]">05:42 <span className="font-['DejaVu_Sans',sans-serif] text-[9px]">م</span></span>
          <span className="text-[10.5px] mt-[4px] font-['DejaVu_Sans',sans-serif]" dir="ltr">٢٠٢٣/٠٤/٠٨</span>
        </div>
      </div>
    </div>
  );
}

export default function App() {
  return (
    <div className="w-[1280px] h-[720px] overflow-hidden bg-black px-[3px] flex flex-col font-['Roboto',sans-serif]">
      <TitleArea />
      <div className="h-[87px] bg-[#f1f1f1] flex shrink-0 border-b border-[#dcdcdc]">
        <Clipboard />
        <GroupLine />
        <FontGroup />
        <GroupLine />
        <Paragraph />
        <GroupLine />
        <Styles />
        <GroupLine />
        <Editing />
        <div className="flex-1 flex items-end justify-end pr-[3px] pb-[1px]"><ChevronUp size={12} strokeWidth={3} className="text-[#666]" /></div>
      </div>
      <HRuler />
      <div className="h-[480px] flex bg-[#e6e6e6] shrink-0 overflow-hidden">
        <VRuler />
        <div className="w-[111px] shrink-0" />
        <Page />
        <div className="flex-1" />
        <div className="w-[7px] h-full bg-[#d8d8d8] flex flex-col shrink-0">
          <div className="mt-[245px] h-[15px] bg-white" />
          <div className="mt-auto h-[15px] bg-white flex items-center justify-center text-[5px] text-[#555]">▼</div>
        </div>
      </div>
      <Status />
      <DesktopStrip />
      <Taskbar />
    </div>
  );
}
